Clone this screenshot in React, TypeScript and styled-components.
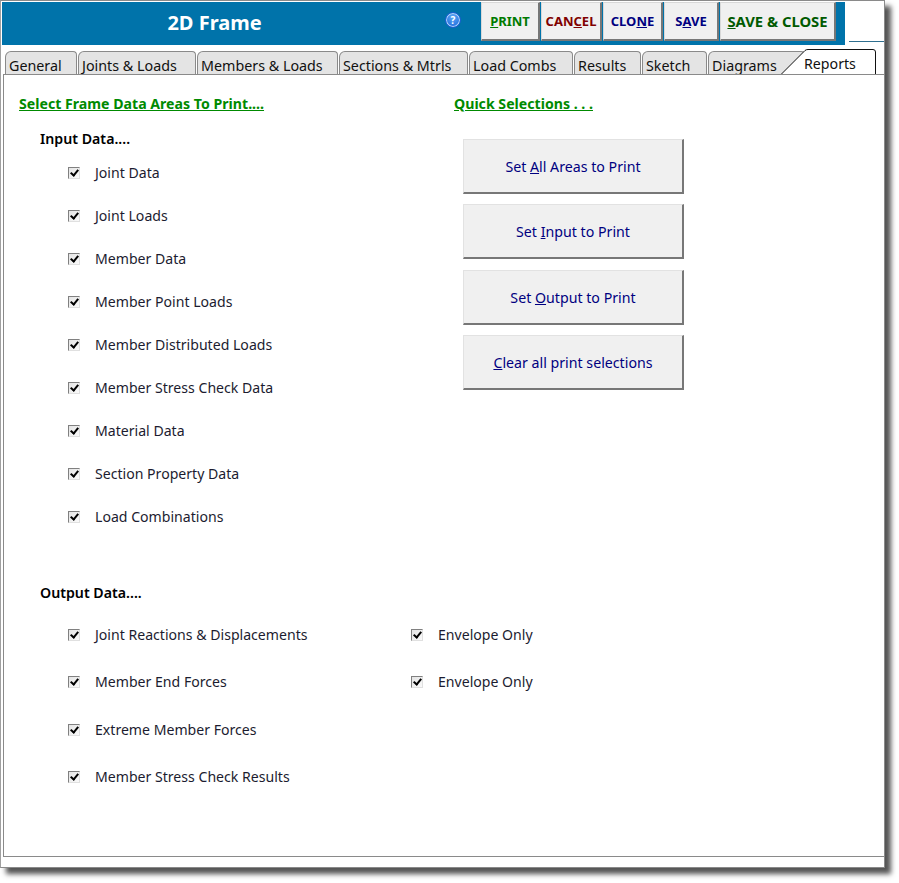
import React from 'react';
import styled, { createGlobalStyle } from 'styled-components';

const inputAreas = [
  'Joint Data',
  'Joint Loads',
  'Member Data',
  'Member Point Loads',
  'Member Distributed Loads',
  'Member Stress Check Data',
  'Material Data',
  'Section Property Data',
  'Load Combinations',
];

const tabs = [
  { label: 'General', width: 72 },
  { label: 'Joints & Loads', width: 118 },
  { label: 'Members & Loads', width: 141 },
  { label: 'Sections & Mtrls', width: 129 },
  { label: 'Load Combs', width: 104 },
  { label: 'Results', width: 67 },
  { label: 'Sketch', width: 65 },
  { label: 'Diagrams', width: 97 },
];

const App: React.FC = () => {
  return (
    <>
      <GlobalStyle />
      <Page>
        <Window>
          <TopRow>
            <Header>
              <Title>2D Frame</Title>
              <HelpIcon>?</HelpIcon>
              <ToolButton $color="#007a00" $width={59}>
                <u>P</u>RINT
              </ToolButton>
              <ToolButton $color="#800000" $width={61}>
                CAN<u>C</u>EL
              </ToolButton>
              <ToolButton $color="#000080" $width={60}>
                CLO<u>N</u>E
              </ToolButton>
              <ToolButton $color="#000080" $width={55}>
                S<u>A</u>VE
              </ToolButton>
              <ToolButton $color="#005a00" $width={116} $size={14.8}>
                <u>S</u>AVE &amp; CLOSE
              </ToolButton>
            </Header>
            <HeaderLine />
          </TopRow>

          <TabBar>
            {tabs.map((tab) => (
              <Tab key={tab.label} $width={tab.width}>
                {tab.label}
              </Tab>
            ))}
            <ActiveTab>
              <ActiveTabEdge viewBox="0 0 96 25" fill="none">
                <path
                  d="M0.5 25 L24 1.5 Q25 0.5 27 0.5 L92 0.5 Q94.5 0.5 94.5 3 L94.5 25"
                  fill="#fff"
                  stroke="#111"
                  strokeWidth="1"
                />
              </ActiveTabEdge>
              <span>Reports</span>
            </ActiveTab>
          </TabBar>

          <Panel>
            <TopSection>
              <LeftColumn>
                <GreenHeading>Select Frame Data Areas To Print....</GreenHeading>
                <GroupTitle>Input Data....</GroupTitle>
                <CheckList>
                  {inputAreas.map((area) => (
                    <CheckRow key={area}>
                      <CheckBox />
                      <CheckLabel>{area}</CheckLabel>
                    </CheckRow>
                  ))}
                </CheckList>
              </LeftColumn>
              <RightColumn>
                <GreenHeading>Quick Selections . . .</GreenHeading>
                <QuickButtons>
                  <QuickButton>
                    Set <u>A</u>ll Areas to Print
                  </QuickButton>
                  <QuickButton>
                    Set <u>I</u>nput to Print
                  </QuickButton>
                  <QuickButton>
                    Set <u>O</u>utput to Print
                  </QuickButton>
                  <QuickButton>
                    <u>C</u>lear all print selections
                  </QuickButton>
                </QuickButtons>
              </RightColumn>
            </TopSection>

            <OutputTitle>Output Data....</OutputTitle>
            <OutputGrid>
              <CheckRow>
                <CheckBox />
                <OutputLabel>Joint Reactions &amp; Displacements</OutputLabel>
                <CheckBox />
                <CheckLabel>Envelope Only</CheckLabel>
              </CheckRow>
              <CheckRow>
                <CheckBox />
                <OutputLabel>Member End Forces</OutputLabel>
                <CheckBox />
                <CheckLabel>Envelope Only</CheckLabel>
              </CheckRow>
              <CheckRow>
                <CheckBox />
                <OutputLabel>Extreme Member Forces</OutputLabel>
              </CheckRow>
              <CheckRow>
                <CheckBox />
                <OutputLabel>Member Stress Check Results</OutputLabel>
              </CheckRow>
            </OutputGrid>
          </Panel>
        </Window>
      </Page>
    </>
  );
};

export default App;

const GlobalStyle = createGlobalStyle`
  body {
    margin: 0;
    background-color: #fff;
    font-family: "Noto Sans", "Open Sans", sans-serif;
  }
`;

const Page = styled.div`
  box-sizing: border-box;
  width: 899px;
  height: 883px;
  overflow: hidden;
`;

const Window = styled.div`
  box-sizing: border-box;
  display: flex;
  flex-direction: column;
  width: 885px;
  height: 868px;
  padding: 1px 0 10px 1px;
  background-color: #fff;
  border: 1px solid #8a8a8a;
  border-left-color: #a0a0a0;
  box-shadow: 6px 6px 5px #555;
`;

const TopRow = styled.div`
  display: flex;
  height: 44px;
`;

const Header = styled.div`
  display: flex;
  align-items: flex-start;
  width: 843px;
  height: 43px;
  background-color: #0073aa;
`;

const HeaderLine = styled.div`
  flex: 1;
  height: 1px;
  margin: 39px 0 0 4px;
  background-color: #2f6f8f;
`;

const Title = styled.div`
  width: 425px;
  line-height: 42px;
  text-align: center;
  color: #fff;
  font-size: 20px;
  font-weight: 700;
`;

const HelpIcon = styled.div`
  width: 14px;
  height: 14px;
  margin: 10px 20px 0 18px;
  border: 1px solid #1b5fd0;
  border-radius: 50%;
  background: radial-gradient(circle at 50% 30%, #5aa8f5, #1560d8);
  box-shadow: inset 0 0 0 1px #b4d6f8;
  color: #fff;
  font-size: 10px;
  font-weight: 700;
  line-height: 14px;
  text-align: center;
`;

const ToolButton = styled.div<{ $color: string; $width: number; $size?: number }>`
  box-sizing: border-box;
  width: ${(props) => props.$width}px;
  height: 39px;
  margin-right: 1px;
  background-color: #f0f0f0;
  border: 1px solid #d8d8d8;
  border-right: 2px solid #777;
  border-bottom: 2px solid #777;
  color: ${(props) => props.$color};
  font-size: ${(props) => props.$size ?? 13}px;
  font-weight: 700;
  line-height: 37px;
  text-align: center;
  white-space: nowrap;
`;

const TabBar = styled.div`
  display: flex;
  align-items: flex-end;
  height: 28px;
  padding-left: 3px;
`;

const Tab = styled.div<{ $width: number }>`
  box-sizing: border-box;
  width: ${(props) => props.$width}px;
  height: 23px;
  margin-right: 1px;
  padding-left: 3px;
  background-color: #e4e4e4;
  border: 1px solid #8a8a8a;
  border-bottom: none;
  border-radius: 6px 4px 0 0;
  color: #111;
  font-size: 14.3px;
  line-height: 27px;
  white-space: nowrap;
`;

const ActiveTab = styled.div`
  position: relative;
  flex: none;
  width: 96px;
  height: 25px;
  margin-left: -25px;
  color: #111;
  font-size: 14.2px;

  span {
    position: absolute;
    left: 23px;
    top: 5px;
  }
`;

const ActiveTabEdge = styled.svg`
  position: absolute;
  inset: 0;
  width: 96px;
  height: 25px;
`;

const Panel = styled.div`
  position: relative;
  flex: 1;
  display: flex;
  flex-direction: column;
  margin-left: 1px;
  padding: 18px 0 0 15px;
  border-top: 1px solid #8a8a8a;
  border-left: 1px solid #8a8a8a;
  border-bottom: 1px solid #8a8a8a;
  background-color: #fff;
`;

const TopSection = styled.div`
  display: flex;
`;

const LeftColumn = styled.div`
  width: 435px;
`;

const RightColumn = styled.div`
  flex: 1;
`;

const GreenHeading = styled.div`
  height: 22px;
  color: #008a00;
  font-size: 14.15px;
  font-weight: 700;
  line-height: 22px;
  text-decoration: underline;
`;

const GroupTitle = styled.div`
  height: 22px;
  margin: 13px 0 0 21px;
  color: #000;
  font-size: 14.2px;
  font-weight: 600;
  line-height: 22px;
`;

const CheckList = styled.div`
  display: flex;
  flex-direction: column;
  gap: 21.1px;
  margin: 11.6px 0 0 49px;
`;

const CheckRow = styled.div`
  display: flex;
  align-items: center;
  height: 22px;
`;

const CheckBox = styled.span`
  position: relative;
  flex: none;
  box-sizing: border-box;
  width: 12px;
  height: 12px;
  background: linear-gradient(135deg, #e4e4e4, #fafafa);
  border: 1px solid;
  border-color: #808080 #e0e0e0 #e0e0e0 #808080;

  &::after {
    content: '';
    position: absolute;
    left: 3px;
    top: 0;
    width: 3px;
    height: 6px;
    border: solid #000;
    border-width: 0 2px 2px 0;
    transform: rotate(40deg);
  }
`;

const CheckLabel = styled.span`
  margin-left: 15px;
  color: #1c1c30;
  font-size: 14.1px;
  line-height: 22px;
  white-space: nowrap;
`;

const OutputLabel = styled(CheckLabel)`
  width: 316px;
`;

const QuickButtons = styled.div`
  display: flex;
  flex-direction: column;
  gap: 10.3px;
  margin: 24px 0 0 9px;
`;

const QuickButton = styled.div`
  box-sizing: border-box;
  width: 221px;
  height: 55px;
  background-color: #f0f0f0;
  border: 1px solid #e2e2e2;
  border-right: 2px solid #777;
  border-bottom: 2px solid #777;
  color: #000080;
  font-size: 14.2px;
  line-height: 54px;
  text-align: center;
  white-space: nowrap;
`;

const OutputTitle = styled(GroupTitle)`
  margin-top: 53.2px;
`;

const OutputGrid = styled.div`
  display: flex;
  flex-direction: column;
  gap: 25.5px;
  margin: 20px 0 0 49px;
`;
